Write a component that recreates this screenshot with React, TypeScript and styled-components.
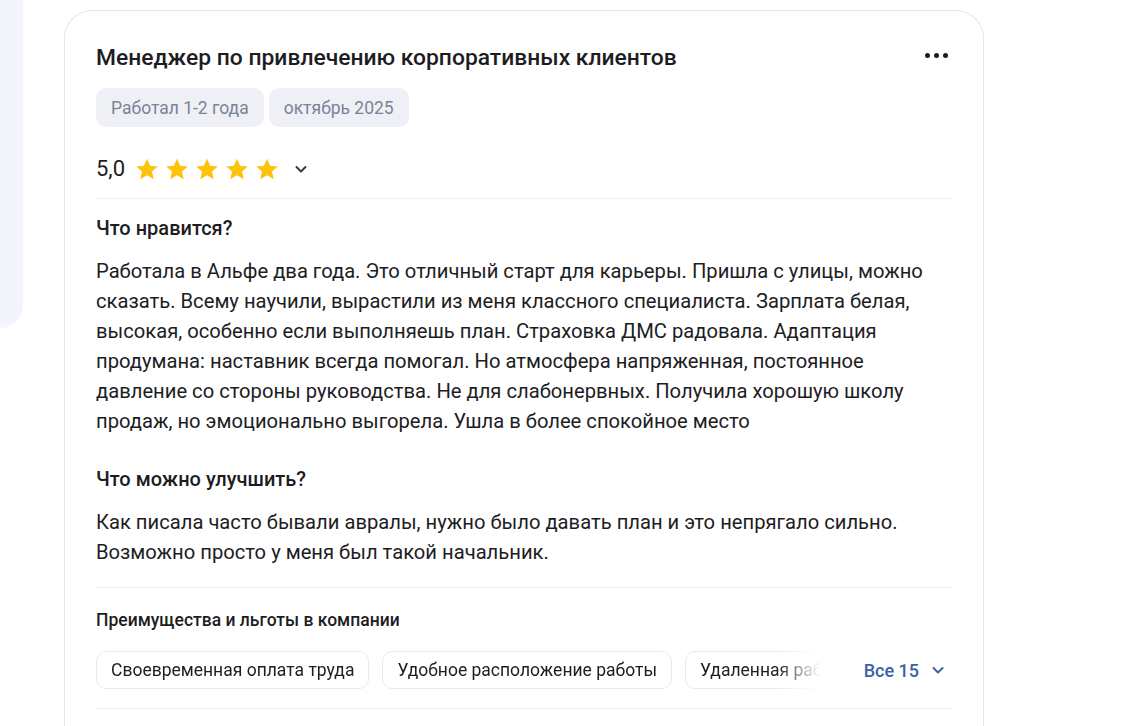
import styled, { createGlobalStyle } from "styled-components";

const Global = createGlobalStyle`
  html, body {
    margin: 0;
    padding: 0;
    background: #fff;
    font-family: Roboto, "Liberation Sans", Arial, sans-serif;
    color: #1d1d1f;
    overflow: hidden;
  }
`

const Page = styled.div`
  display: flex;
  align-items: flex-start;
  height: 726px;
  overflow: hidden;
`
const SidePanel = styled.div`
  width: 23px;
  height: 328px;
  flex-shrink: 0;
  background: #f4f5fa;
  border-bottom-right-radius: 22px;
`
const Card = styled.article`
  margin: 10px 0 0 41px;
  width: 920px;
  box-sizing: border-box;
  min-height: 760px;
  padding: 32px 31px 0;
  border: 1px solid #e3e6ef;
  border-bottom: none;
  border-radius: 28px 28px 0 0;
`
const Header = styled.div`
  display: flex;
  align-items: center;
  justify-content: space-between;
`
const Title = styled.h2`
  margin: 0;
  font-size: 22.85px;
  line-height: 30px;
  font-weight: 500;
  color: #1d1d1f;
`
const MoreButton = styled.button`
  display: flex;
  gap: 4px;
  padding: 4px;
  margin-top: -6px;
  background: none;
  border: none;
  cursor: pointer;

  span {
    width: 5px;
    height: 5px;
    border-radius: 50%;
    background: #1d1d1f;
  }
`
const Tags = styled.div`
  display: flex;
  gap: 5px;
  margin-top: 15px;
`
const Tag = styled.span`
  display: inline-flex;
  align-items: center;
  height: 39px;
  padding: 0 15px;
  border-radius: 10px;
  background: #eef0f6;
  color: #7b8396;
  font-size: 17.5px;
`
const RatingRow = styled.div`
  display: flex;
  align-items: center;
  height: 32px;
  margin-top: 26px;
`
const Score = styled.span`
  font-size: 22px;
  line-height: 32px;
  margin-right: 9px;
`
const Stars = styled.div`
  display: flex;
  gap: 4px;
`
const Chevron = styled.svg<{ $color?: string }>`
  flex-shrink: 0;
  color: ${p => p.$color || "#3a3a3c"};
`
const ToggleRating = styled.button`
  display: flex;
  align-items: center;
  margin-left: 13px;
  padding: 0;
  background: none;
  border: none;
  cursor: pointer;
`
const Divider = styled.hr<{ $top: number }>`
  margin: ${p => p.$top}px 0 0;
  border: none;
  height: 1px;
  background: #eff0f4;
`
const Heading = styled.h3<{ $top: number }>`
  margin: ${p => p.$top}px 0 0;
  font-size: 20px;
  line-height: 24px;
  font-weight: 500;
`
const Body = styled.p`
  margin: 16px 0 0;
  font-size: 20.2px;
  line-height: 30px;
  font-weight: 400;
  color: #1d1d1f;
`
const BenefitsTitle = styled.h4`
  margin: 21px 0 0;
  font-size: 17.5px;
  line-height: 22px;
  font-weight: 500;
`
const BenefitsRow = styled.div`
  display: flex;
  align-items: center;
  margin-top: 20px;
`
const BenefitsList = styled.div`
  flex: 1;
  display: flex;
  gap: 13px;
  overflow: hidden;
  max-width: 724px;
  mask-image: linear-gradient(to right, #000 0, #000 680px, transparent 724px);
  -webkit-mask-image: linear-gradient(to right, #000 0, #000 680px, transparent 724px);
`
const Benefit = styled.span`
  flex-shrink: 0;
  display: inline-flex;
  align-items: center;
  height: 36px;
  padding: 0 14px;
  border: 1px solid #e8eaf0;
  border-radius: 10px;
  font-size: 17.5px;
  white-space: nowrap;
`
const ShowAll = styled.button`
  display: flex;
  align-items: center;
  gap: 11px;
  margin-left: auto;
  padding: 0 6px 0 0;
  background: none;
  border: none;
  font-family: inherit;
  font-size: 18px;
  font-weight: 500;
  color: #3b62a9;
  cursor: pointer;
`

function Star() {
  return (
    <svg width="26" height="26" viewBox="0 0 24 24">
      <path
        fill="#fdc30b"
        d="M12 2.5l2.9 6.6 7.1.6-5.4 4.7 1.6 7-6.2-3.7-6.2 3.7 1.6-7L2 9.7l7.1-.6z"
      />
    </svg>
  )
}

function ChevronDown({ color, size = 16 }: { color?: string; size?: number }) {
  return (
    <Chevron $color={color} width={size} height={size} viewBox="0 0 16 16" fill="none">
      <path d="M3.5 6l4.5 4.5L12.5 6" stroke="currentColor" strokeWidth="2" strokeLinecap="round" strokeLinejoin="round" />
    </Chevron>
  )
}

const benefits = [
  "Своевременная оплата труда",
  "Удобное расположение работы",
  "Удаленная работа",
  "Корпоративное обучение",
]

export default function App() {
  return (
    <>
      <Global />
      <Page>
        <SidePanel />
        <Card>
          <Header>
            <Title>Менеджер по привлечению корпоративных клиентов</Title>
            <MoreButton aria-label="Ещё">
              <span />
              <span />
              <span />
            </MoreButton>
          </Header>

          <Tags>
            <Tag>Работал 1-2 года</Tag>
            <Tag>октябрь 2025</Tag>
          </Tags>

          <RatingRow>
            <Score>5,0</Score>
            <Stars>
              {[0, 1, 2, 3, 4].map(i => <Star key={i} />)}
            </Stars>
            <ToggleRating aria-label="Подробнее">
              <ChevronDown />
            </ToggleRating>
          </RatingRow>

          <Divider $top={13} />

          <Heading $top={17}>Что нравится?</Heading>
          <Body>
            Работала в Альфе два года. Это отличный старт для карьеры. Пришла с улицы, можно
            сказать. Всему научили, вырастили из меня классного специалиста. Зарплата белая,
            высокая, особенно если выполняешь план. Страховка ДМС радовала. Адаптация
            продумана: наставник всегда помогал. Но атмосфера напряженная, постоянное
            давление со стороны руководства. Не для слабонервных. Получила хорошую школу
            продаж, но эмоционально выгорела. Ушла в более спокойное место
          </Body>

          <Heading $top={31}>Что можно улучшить?</Heading>
          <Body>
            Как писала часто бывали авралы, нужно было давать план и это непрягало сильно.
            Возможно просто у меня был такой начальник.
          </Body>

          <Divider $top={20} />

          <BenefitsTitle>Преимущества и льготы в компании</BenefitsTitle>
          <BenefitsRow>
            <BenefitsList>
              {benefits.map(b => <Benefit key={b}>{b}</Benefit>)}
            </BenefitsList>
            <ShowAll>
              Все 15
              <ChevronDown color="#3b62a9" />
            </ShowAll>
          </BenefitsRow>

          <Divider $top={19} />
        </Card>
      </Page>
    </>
  )
}
